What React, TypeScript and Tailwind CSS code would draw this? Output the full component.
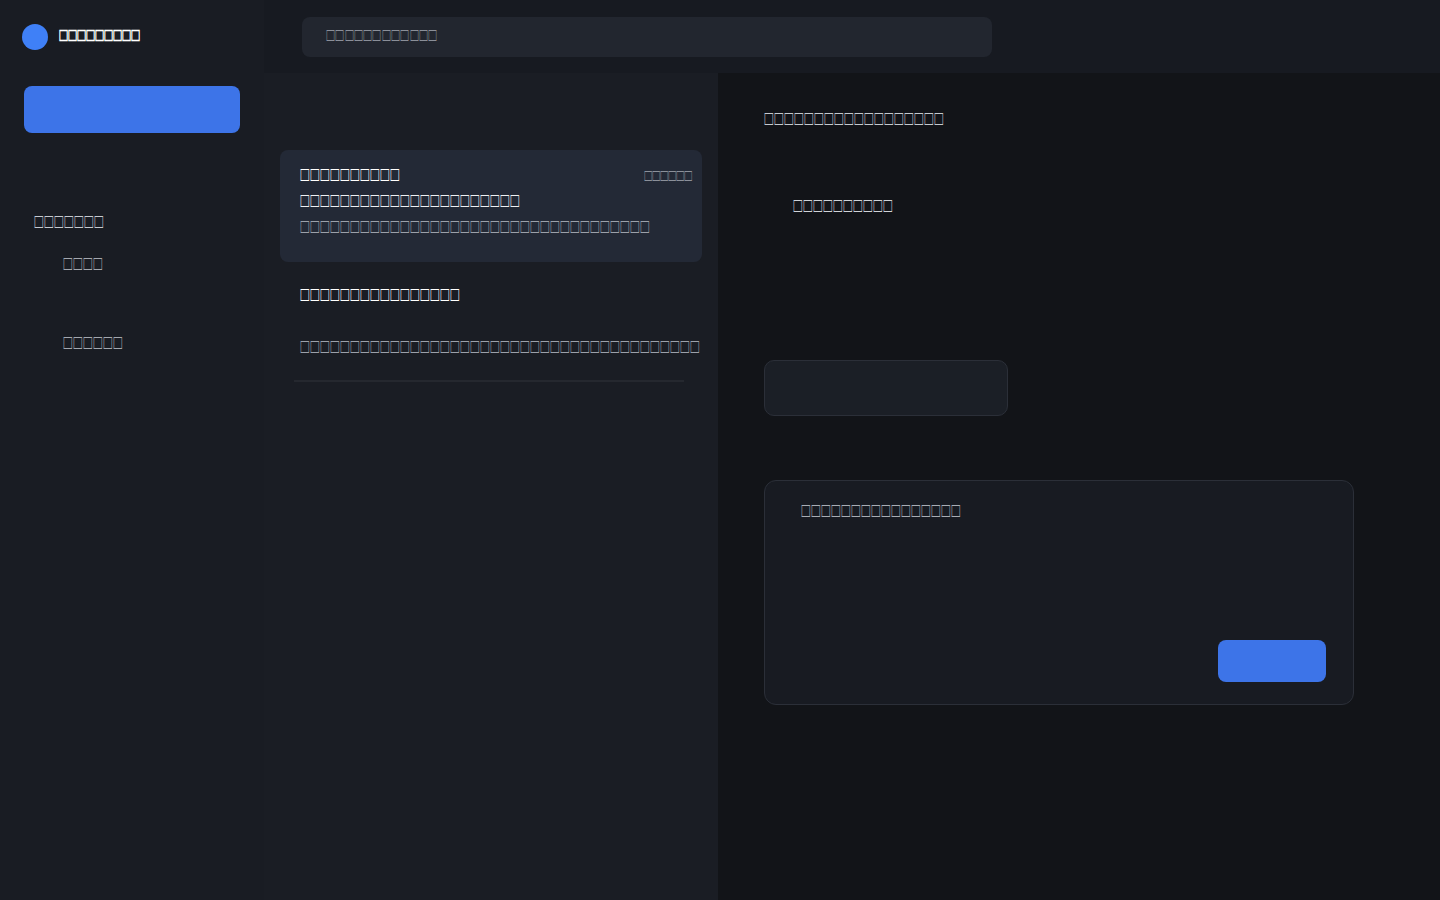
import React from "react";

const box = (n: number) => "\u2395".repeat(n);

export default function App() {
  return (
    <div className="flex h-screen w-full overflow-hidden bg-[#121418] font-['DejaVu_Sans',sans-serif]">
      <aside className="flex w-[264px] shrink-0 flex-col bg-[#191c23]">
        <div className="flex h-[73px] items-center gap-[11px] pl-[22px]">
          <div className="h-[26px] w-[26px] rounded-full bg-[#3f80f7]" />
          <span className="text-[15px] font-semibold text-white">{box(9)}</span>
        </div>
        <div className="mt-[13px] px-6">
          <button className="h-[47px] w-full rounded-lg bg-[#3d74e8]" />
        </div>
        <div className="mt-[71px] pl-[34px] text-[16px] leading-6 text-[#c6cad1]">{box(7)}</div>
        <nav className="flex flex-col pl-[63px] text-[16px] leading-6 text-[#a3a7ae]">
          <div className="mt-[18px]">{box(4)}</div>
          <div className="mt-[55px]">{box(6)}</div>
        </nav>
      </aside>
      <div className="flex min-w-0 flex-1 flex-col">
        <header className="flex h-[73px] shrink-0 items-center bg-[#171a21] pl-[38px]">
          <div className="flex h-10 w-[690px] items-center rounded-lg bg-[#22262f] px-6 text-[15px] tracking-[0.3px] text-[#8a8f98]">
            {box(12)}
          </div>
        </header>
        <div className="flex min-h-0 flex-1">
          <section className="w-[454px] shrink-0 bg-[#1a1d24] px-4 pt-[77px]">
            <div className="h-[112px] rounded-lg bg-[#232936] pl-5 pr-[10px] pt-[13px]">
              <div className="flex items-center justify-between leading-[26px]">
                <span className="text-[16px] text-white">{box(10)}</span>
                <span className="text-[14px] text-[#8b909a]">{box(6)}</span>
              </div>
              <div className="whitespace-nowrap text-[16px] leading-[26px] text-[#eef0f3]">{box(22)}</div>
              <div className="whitespace-nowrap text-[16px] leading-[26px] text-[#9ca1aa]">{box(35)}</div>
            </div>
            <div className="mt-2 px-5 pt-[13px] pb-[19px]">
              <div className="whitespace-nowrap text-[16px] leading-[26px] text-white">{box(16)}</div>
              <div className="h-[26px]" />
              <div className="whitespace-nowrap text-[16px] leading-[26px] text-[#9ca1aa]">{box(40)}</div>
            </div>
            <div className="ml-[14px] mr-[18px] h-[2px] bg-[#25282f]" />
          </section>
          <main className="flex flex-1 flex-col bg-[#121418] pl-[46px] pt-[35px]">
            <div className="text-[16px] leading-6 text-[#c5c9cf]">{box(18)}</div>
            <div className="mt-[63px] pl-[29px] text-[16px] leading-6 text-[#d0d3d8]">{box(10)}</div>
            <div className="mt-[141px] h-[56px] w-[244px] rounded-[10px] border border-[#2b2f38] bg-[#1b1f26]" />
            <div className="mt-[64px] flex h-[225px] w-[590px] flex-col rounded-xl border border-[#2b2f38] bg-[#181b22]">
              <div className="pl-9 pt-[19px] text-[16px] leading-6 text-[#a9adb4]">{box(16)}</div>
              <button className="mb-[22px] mr-[27px] mt-auto h-[42px] w-[108px] self-end rounded-lg bg-[#3d74e8]" />
            </div>
          </main>
        </div>
      </div>
    </div>
  );
}
